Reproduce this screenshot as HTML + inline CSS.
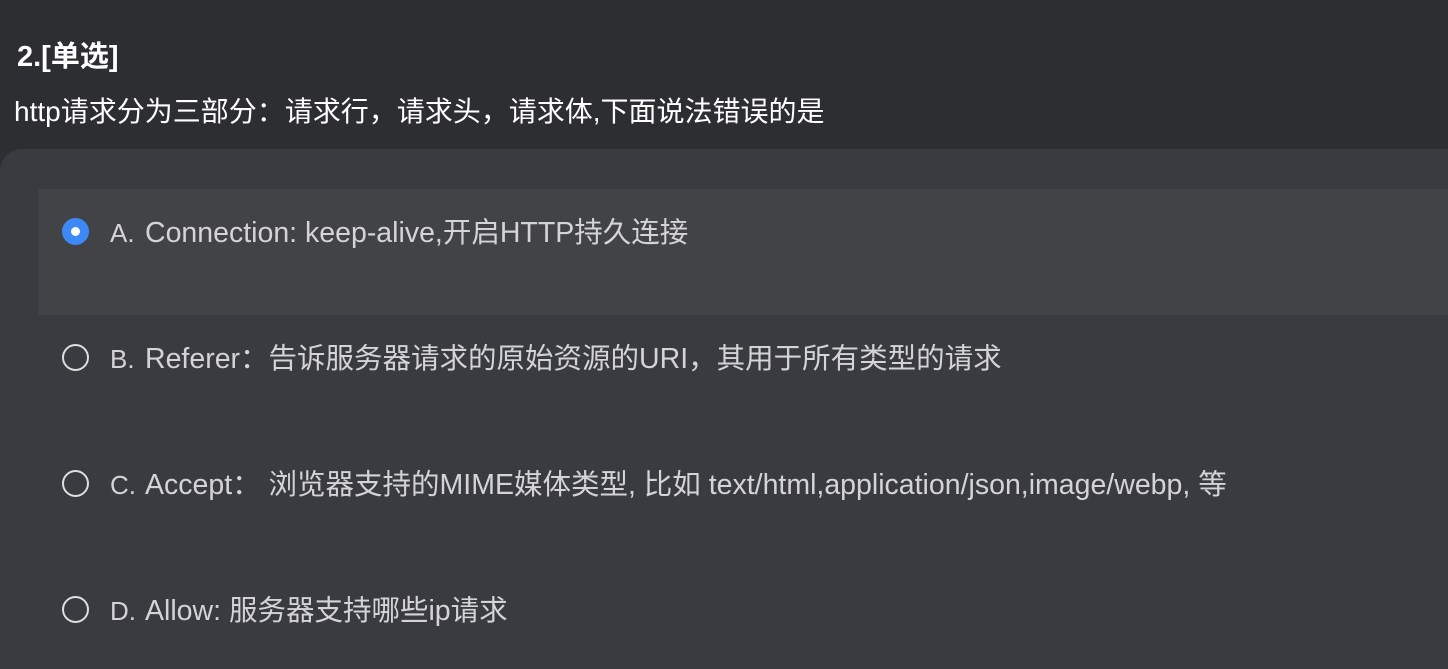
<!DOCTYPE html>
<html><head><meta charset="utf-8"><style>
html,body{margin:0;padding:0;width:1448px;height:648px;overflow:hidden;background:#2d2e32;font-family:"Liberation Sans","Noto Sans CJK SC",sans-serif;}
.t1{position:absolute;left:17px;top:33px;font-size:29px;font-weight:bold;color:#fff;}
.t2{position:absolute;left:14px;top:90px;font-size:28px;color:#fff;white-space:nowrap;}
.card{position:absolute;left:0;top:149px;width:1460px;height:520px;background:#393b40;border-radius:22px 0 0 0;}
.sel{position:absolute;left:38px;top:189px;width:1420px;height:126px;background:#424347;}
.opt{position:absolute;left:62px;white-space:nowrap;color:#d4d4d6;font-size:28.5px;}
.r{position:absolute;left:0;top:2px;width:23px;height:23px;border:2px solid #dedede;border-radius:50%;}
.r.on{width:27px;height:27px;border:none;background:#3d8af7;}
.r.on::after{content:"";position:absolute;left:9px;top:9px;width:9px;height:9px;border-radius:50%;background:#fff;}
.l{position:absolute;left:48px;top:2px;font-size:26px;}
.x{position:absolute;left:83px;top:-6px;}
</style></head><body>
<div class="t1">2.[单选]</div>
<div class="t2">http请求分为三部分：请求行，请求头，请求体,下面说法错误的是</div>
<div class="card"></div>
<div class="sel"></div>
<div class="opt" style="top:216px"><div class="r on"></div><span class="l">A.</span><span class="x">Connection: keep-alive,开启HTTP持久连接</span></div>
<div class="opt" style="top:342px"><div class="r"></div><span class="l">B.</span><span class="x">Referer：告诉服务器请求的原始资源的URI，其用于所有类型的请求</span></div>
<div class="opt" style="top:468px"><div class="r"></div><span class="l">C.</span><span class="x">Accept： 浏览器支持的MIME媒体类型, 比如 text/html,application/json,image/webp, 等</span></div>
<div class="opt" style="top:594px"><div class="r"></div><span class="l">D.</span><span class="x">Allow: 服务器支持哪些ip请求</span></div>
</body></html>
